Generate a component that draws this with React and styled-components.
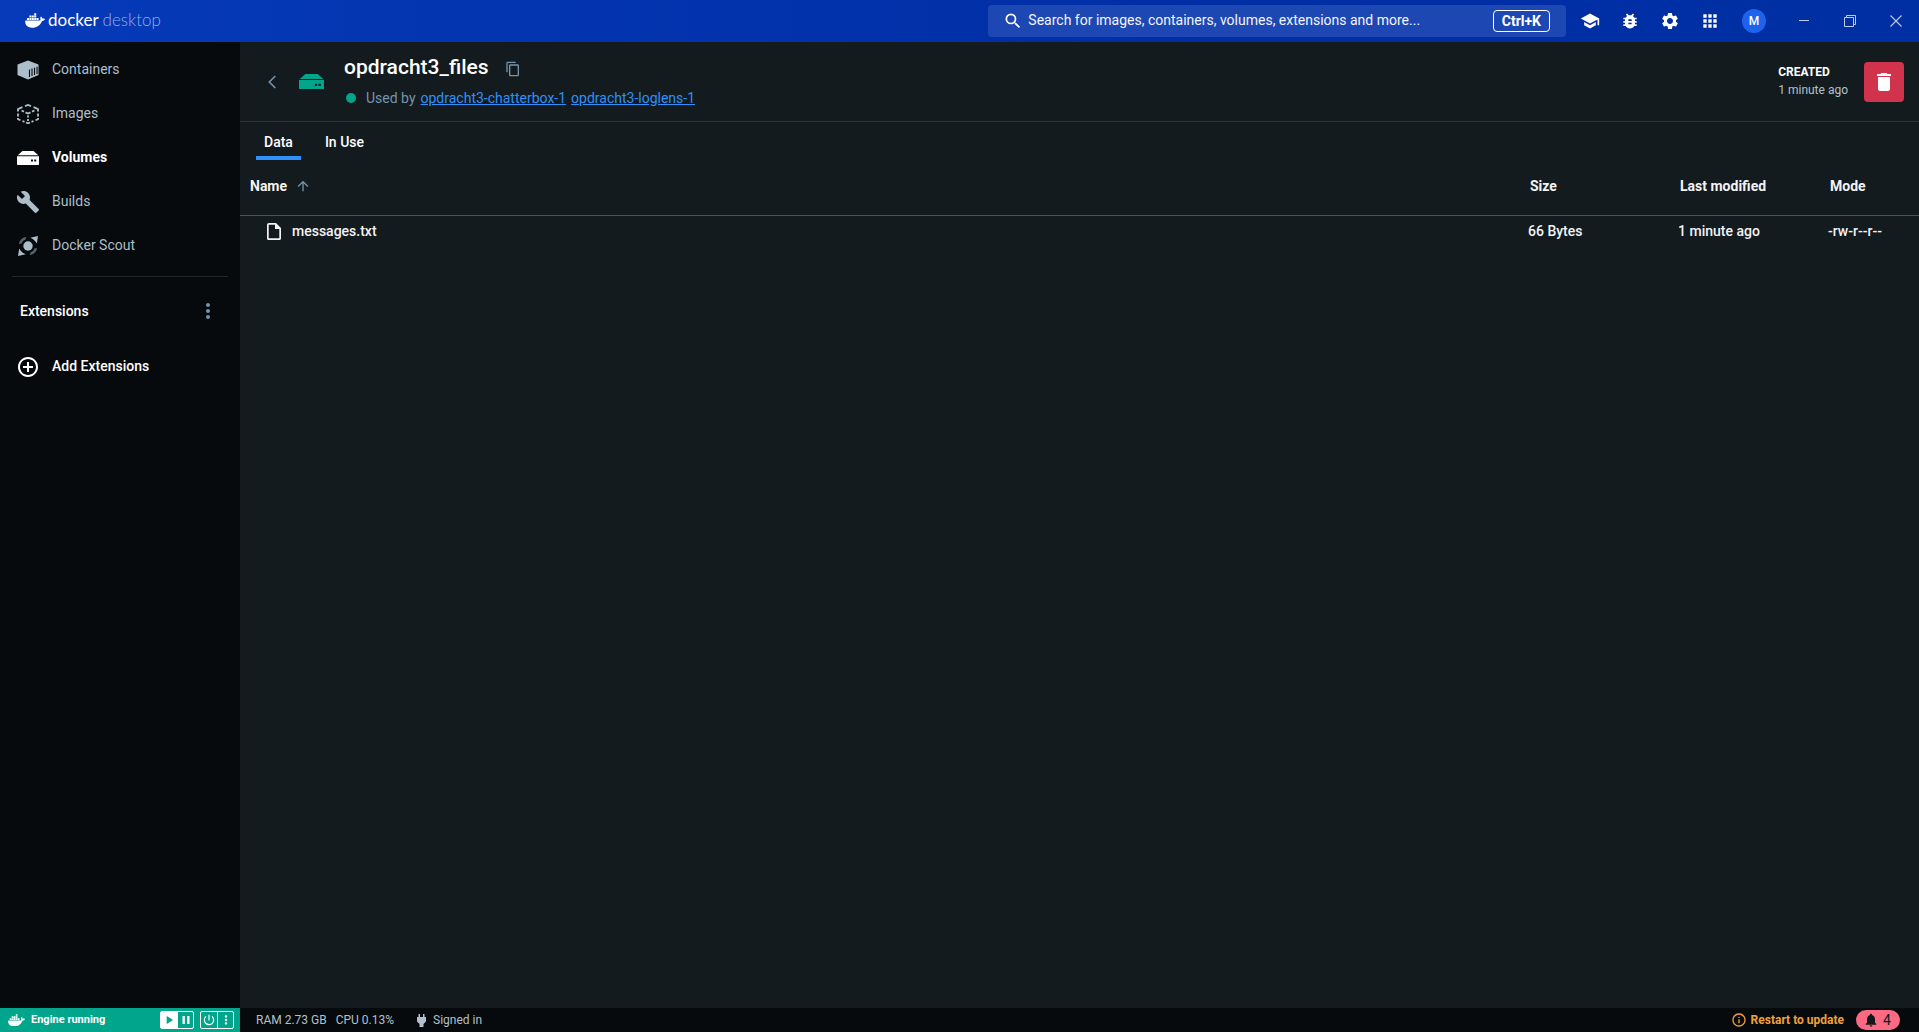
import React from "react";
import styled, { createGlobalStyle } from "styled-components";
import {
  MdAddCircleOutline,
  MdApps,
  MdArrowUpward,
  MdBugReport,
  MdBuild,
  MdContentCopy,
  MdDelete,
  MdInfoOutline,
  MdMoreVert,
  MdNotifications,
  MdPause,
  MdPlayArrow,
  MdPowerSettingsNew,
  MdSchool,
  MdSearch,
  MdSettings,
} from "react-icons/md";

const GlobalStyle = createGlobalStyle`
  * {
    box-sizing: border-box;
  }
  body {
    margin: 0;
    background-color: #141b1e;
    color: #ffffff;
    font-family: Roboto, "Liberation Sans", sans-serif;
    font-size: 14px;
    line-height: 20px;
  }
  button, input {
    font: inherit;
    color: inherit;
  }
  svg {
    display: block;
    flex-shrink: 0;
  }
`;

const Page = styled.div`
  display: flex;
  flex-direction: column;
  height: 100vh;
`;
const IconButton = styled.button`
  display: flex;
  align-items: center;
  justify-content: center;
  padding: 0;
  border: none;
  background: none;
  width: ${(props) => props.$width || 24}px;
  height: ${(props) => props.$height || 24}px;
  color: ${(props) => props.$color || "#ffffff"};
  cursor: pointer;
`;

const TopBar = styled.header`
  display: flex;
  align-items: center;
  height: 42px;
  flex-shrink: 0;
  padding-left: 25px;
  background: linear-gradient(90deg, #063ab8 0%, #002ea6 60%, #002ea3 100%);
`;
const Brand = styled.div`
  display: flex;
  align-items: center;
  gap: 3px;
  margin-right: auto;
  padding-bottom: 2px;
  font-family: Lato, sans-serif;
  font-size: 17px;
`;
const BrandSub = styled.span`
  font-weight: 300;
  color: #93abe6;
`;
const Search = styled.label`
  display: flex;
  align-items: center;
  width: 30.5%;
  height: 32px;
  margin-right: 4px;
  padding: 0 16px 0 15px;
  border-radius: 4px;
  background-color: #1d47b2;
`;
const SearchInput = styled.input`
  flex: 1;
  min-width: 0;
  margin-left: 5px;
  padding: 0 0 2px;
  border: none;
  outline: none;
  background: none;
  &::placeholder {
    color: #ffffff;
    opacity: 0.95;
  }
`;
const Shortcut = styled.kbd`
  height: 22px;
  padding: 0 8px;
  border: 1px solid #ffffff;
  border-radius: 4px;
  font-family: inherit;
  font-weight: 700;
`;
const Avatar = styled.button`
  width: 24px;
  height: 24px;
  margin: 0 15px 0 12px;
  padding: 0;
  border: none;
  border-radius: 50%;
  background-color: #1d63ed;
  font-size: 12px;
  font-weight: 500;
`;

const Body = styled.div`
  display: flex;
  flex: 1;
  min-height: 0;
`;
const Sidebar = styled.aside`
  display: flex;
  flex-direction: column;
  width: 240px;
  flex-shrink: 0;
  padding-top: 5px;
  background-color: #060a0c;
`;
const NavItem = styled.a`
  display: flex;
  align-items: center;
  gap: 12px;
  height: 44px;
  padding-left: 16px;
  color: ${(props) => (props.$bright ? "#ffffff" : "#adbecb")};
  font-weight: ${(props) => props.$weight || 400};
  text-decoration: none;
`;
const NavIcon = styled.span`
  display: flex;
  justify-content: center;
  width: 24px;
  padding-top: 2px;
`;
const Divider = styled.hr`
  width: 216px;
  height: 1px;
  margin: 9px 12px 0;
  border: none;
  background-color: #1f2729;
`;
const ExtensionsHeader = styled.div`
  display: flex;
  align-items: center;
  justify-content: space-between;
  height: 67px;
  padding: 0 20px;
  font-weight: 500;
`;

const Main = styled.main`
  flex: 1;
  min-width: 0;
`;
const VolumeHeader = styled.section`
  display: flex;
  align-items: center;
  height: 80px;
  padding: 0 15px 0 20px;
  border-bottom: 1px solid #2c3337;
`;
const VolumeIconBox = styled.span`
  margin: 0 20px 0 15px;
  color: #00a58c;
`;
const VolumeInfo = styled.div`
  flex: 1;
  padding-top: 3px;
`;
const TitleRow = styled.div`
  display: flex;
  align-items: center;
  gap: 12px;
  height: 30px;
`;
const Title = styled.h1`
  margin: 0;
  font-size: 21px;
  font-weight: 500;
  line-height: 28px;
`;
const CopyIcon = styled.span`
  padding-top: 4px;
`;
const UsedBy = styled.div`
  display: flex;
  align-items: center;
  gap: 5px;
  height: 32px;
  padding-left: 2px;
  color: #7794ab;
`;
const StatusDot = styled.span`
  width: 10px;
  height: 10px;
  margin-right: 5px;
  border-radius: 50%;
  background-color: #00a58c;
`;
const ContainerLink = styled.a`
  color: #2e90fa;
  text-decoration: underline;
`;
const Created = styled.div`
  margin-right: 16px;
  padding-bottom: 2px;
  font-size: 12px;
  line-height: 18px;
  color: #b1c0cc;
`;
const CreatedLabel = styled.div`
  color: #ffffff;
  font-weight: 700;
`;
const DeleteButton = styled.button`
  display: flex;
  align-items: center;
  justify-content: center;
  width: 40px;
  height: 40px;
  padding: 0;
  border: none;
  border-radius: 4px;
  background-color: #d1334c;
`;

const Tabs = styled.nav`
  display: flex;
  gap: 16px;
  padding: 0 16px;
`;
const Tab = styled.button`
  height: 38px;
  padding: 6px 8px 0;
  border: none;
  border-bottom: 4px solid ${(props) => (props.$active ? "#2e90fa" : "transparent")};
  background: none;
  font-weight: 500;
`;
const FileTable = styled.table`
  width: 100%;
  table-layout: fixed;
  border-collapse: separate;
  border-spacing: 0;
  color: #f2f3f4;
  text-align: left;
`;
const HeadCell = styled.th`
  width: ${(props) => props.$width || "auto"};
  height: 56px;
  padding: 0 10px 4px;
  border-bottom: 1px solid #4d5254;
  font-weight: 700;
`;
const Cell = styled.td`
  height: 30px;
  padding: 0 8px;
  font-weight: 500;
`;
const SortLabel = styled.span`
  display: flex;
  align-items: center;
  gap: 8px;
`;
const FileName = styled.span`
  display: flex;
  align-items: center;
  gap: 11px;
  padding-left: 19px;
`;

const Footer = styled.footer`
  display: flex;
  align-items: stretch;
  height: 24px;
  flex-shrink: 0;
  background-color: #060a0c;
  color: #b1c0cc;
  font-size: 12px;
`;
const Engine = styled.div`
  display: flex;
  align-items: center;
  width: 240px;
  padding: 0 6px 0 8px;
  background-color: #00a58c;
  color: #ffffff;
  font-size: 11px;
  font-weight: 700;
`;
const EngineText = styled.span`
  flex: 1;
  padding-left: 6px;
`;
const ButtonGroup = styled.div`
  display: flex;
  height: 18px;
  margin-left: 6px;
  border: 1px solid #ffffff;
  border-radius: 2px;
`;
const EngineButton = styled.button`
  display: flex;
  align-items: center;
  justify-content: center;
  width: 16px;
  padding: 0;
  border: none;
  background-color: ${(props) => (props.$filled ? "#ffffff" : "transparent")};
  color: ${(props) => (props.$filled ? "#00a58c" : "#ffffff")};
  & + & {
    border-left: 1px solid #ffffff;
  }
`;
const Stats = styled.div`
  display: flex;
  align-items: center;
  flex: 1;
  gap: 9px;
  padding-left: 16px;
`;
const SignedIn = styled.span`
  display: flex;
  align-items: center;
  gap: 7px;
  margin-left: 14px;
`;
const UpdateButton = styled.button`
  display: flex;
  align-items: center;
  gap: 4px;
  padding: 0;
  border: none;
  background: none;
  color: #f0a03c;
  font-weight: 700;
`;
const Notifications = styled.button`
  display: flex;
  align-items: center;
  justify-content: center;
  gap: 4px;
  align-self: center;
  width: 44px;
  height: 20px;
  margin: 0 19px 0 12px;
  padding: 0 2px 0 0;
  border: none;
  border-radius: 10px;
  background-color: #fb6a82;
  color: #10181b;
  font-size: 14px;
`;

function WhaleIcon({ width }) {
  return (
    <svg width={width} height={(width * 15) / 20} viewBox="0 0 20 15" fill="currentColor">
      <path d="M0.300 7.500H15.200C15.500 7 15.700 6.500 15.300 5.600 15.100 5 15.500 4 16 3.600 17 4.200 17.200 5 17.300 5.600 18.100 5.300 19.200 5.400 20 5.900 19.500 7.200 18.500 7.900 17 7.900 15.200 12.300 12 14.700 7.200 14.700 2.500 14.700-0.400 12 0.300 7.500Z" />
      <path d="M2 5H4V7H2ZM4.400 5H6.400V7H4.400ZM6.800 5H8.800V7H6.800ZM9.200 5H11.200V7H9.200ZM11.600 5H13.600V7H11.600ZM4.400 2.600H6.400V4.600H4.400ZM6.800 2.600H8.800V4.600H6.800ZM9.200 2.600H11.200V4.600H9.200ZM9.200 0.200H11.200V2.200H9.200Z" />
    </svg>
  );
}

function ContainerIcon() {
  return (
    <svg width="22" height="20" viewBox="0 0 22 20" fill="currentColor">
      <path d="M11 0.500 21.500 4.500V15L11 19.500 0.500 15V4.500Z" />
      <path
        d="M12.500 9.500V17M15 8.500V16M17.500 7.700V15M20 6.800V14"
        stroke="#060a0c"
        strokeWidth="1.100"
      />
    </svg>
  );
}

function ImageIcon() {
  return (
    <svg width="22" height="20" viewBox="0 0 22 20" fill="none" stroke="currentColor" strokeWidth="1.800">
      <path d="M8 2.200 11 1 14 2.200M16.500 3.200 19.500 4.400 21 5V7.500M21 9.500V12.500M21 14V15.200L18.500 16.300M16.500 17 14.500 17.900M13 18.500 11 19.300 9 18.500M7.500 17.900 5.500 17M3.500 16.300 1 15.200V14M1 12.500V9.500M1 7.500V5L2.500 4.400 5.500 3.200" />
      <path d="M4.500 6.500 7 7.600M8.500 8.400 11 9.600 13.500 8.400M15 7.600 17.500 6.500M11 11.500V13.500M11 15V17" />
    </svg>
  );
}

function VolumeIcon({ width, eye }) {
  return (
    <svg width={width} height={(width * 14) / 22} viewBox="0 0 22 14" fill="currentColor">
      <path d="M5.500 0H16.500L21.300 4.300H0.700Z" />
      <path d="M0 5.300H22V13C22 13.500 21.700 14 21 14H1C0.300 14 0 13.500 0 13Z" />
      <path d="M14 8.500H16V10.500H14ZM17.200 8.500H19.200V10.500H17.200Z" fill={eye} />
    </svg>
  );
}

function ScoutIcon() {
  return (
    <svg width="20" height="20" viewBox="0 0 20 20" fill="currentColor">
      <circle cx="10" cy="10" r="4.700" />
      <path d="M20 0 18.800 7.500C17.500 5 15.300 2.900 12.300 1.700ZM0 20 1.200 12.500C2.500 15 4.700 17.100 7.700 18.300Z" />
      <path
        d="M1 8C1.500 4.200 4.500 1.300 8.200 1L7.500 3.500C5.500 4.200 4.200 5.500 3.500 7.500ZM19 12C18.500 15.800 15.500 18.700 11.800 19L12.500 16.500C14.500 15.800 15.800 14.500 16.500 12.500Z"
        opacity="0.500"
      />
    </svg>
  );
}

function BackIcon() {
  return (
    <svg width="8" height="14" viewBox="0 0 8 14" fill="none" stroke="currentColor" strokeWidth="1.600">
      <path d="M7.300 1 1.300 7 7.300 13" />
    </svg>
  );
}

function FileIcon() {
  return (
    <svg width="14" height="17" viewBox="0 0 14 17" fill="currentColor">
      <path
        fillRule="evenodd"
        d="M2 0H9L14 5V15.500C14 16.300 13.300 17 12.500 17H1.500C0.700 17 0 16.300 0 15.500V2C0 0.800 0.800 0 2 0ZM1.700 1.700V15.300H12.300V6H8V1.700Z"
      />
    </svg>
  );
}

function PlugIcon() {
  return (
    <svg width="9" height="13" viewBox="0 0 9 13" fill="currentColor">
      <path d="M1.500 0H3V3H6V0H7.500V3H9V7.500L6.500 10V13H2.500V10L0 7.500V3H1.500Z" />
    </svg>
  );
}

function MinimizeIcon() {
  return (
    <svg width="10" height="10" viewBox="0 0 10 10" stroke="currentColor">
      <path d="M0 4.500H10" />
    </svg>
  );
}

function RestoreIcon() {
  return (
    <svg width="12" height="12" viewBox="0 0 12 12" fill="none" stroke="currentColor">
      <path d="M0.500 2.500H9.500V11.500H0.500ZM2.500 2.500V0.500H11.500V9.500H9.500" />
    </svg>
  );
}

function CloseIcon() {
  return (
    <svg width="12" height="12" viewBox="0 0 12 12" stroke="currentColor" strokeWidth="1.100">
      <path d="M0.500 0.500 11.500 11.500M11.500 0.500 0.500 11.500" />
    </svg>
  );
}

const navItems = [
  { label: "Containers", icon: <ContainerIcon /> },
  { label: "Images", icon: <ImageIcon /> },
  { label: "Volumes", icon: <VolumeIcon width={22} eye="#060a0c" />, active: true },
  { label: "Builds", icon: <MdBuild size={24} /> },
  { label: "Docker Scout", icon: <ScoutIcon /> },
];

const files = [
  { name: "messages.txt", size: "66 Bytes", modified: "1 minute ago", mode: "-rw-r--r--" },
];

function App() {
  return (
    <Page>
      <GlobalStyle />
      <TopBar>
        <Brand>
          <WhaleIcon width={20} />
          <span>
            docker <BrandSub>desktop</BrandSub>
          </span>
        </Brand>
        <Search>
          <MdSearch size={20} />
          <SearchInput
            type="text"
            aria-label="Search"
            placeholder="Search for images, containers, volumes, extensions and more..."
          />
          <Shortcut>Ctrl+K</Shortcut>
        </Search>
        <IconButton $width={40} aria-label="Learning center">
          <MdSchool size={20} />
        </IconButton>
        <IconButton $width={40} aria-label="Troubleshoot">
          <MdBugReport size={20} />
        </IconButton>
        <IconButton $width={40} aria-label="Settings">
          <MdSettings size={20} />
        </IconButton>
        <IconButton $width={40} aria-label="Apps">
          <MdApps size={20} />
        </IconButton>
        <Avatar aria-label="Account">M</Avatar>
        <IconButton $width={46} $color="#bfcbe9" aria-label="Minimize">
          <MinimizeIcon />
        </IconButton>
        <IconButton $width={46} $color="#bfcbe9" aria-label="Restore">
          <RestoreIcon />
        </IconButton>
        <IconButton $width={46} $color="#bfcbe9" aria-label="Close">
          <CloseIcon />
        </IconButton>
      </TopBar>
      <Body>
        <Sidebar>
          {navItems.map((item) => (
            <NavItem
              key={item.label}
              href="#"
              $bright={item.active}
              $weight={item.active ? 700 : 400}
            >
              <NavIcon>{item.icon}</NavIcon>
              {item.label}
            </NavItem>
          ))}
          <Divider />
          <ExtensionsHeader>
            Extensions
            <IconButton $color="#7794ab" aria-label="Extension options">
              <MdMoreVert size={24} />
            </IconButton>
          </ExtensionsHeader>
          <NavItem href="#" $bright $weight={500}>
            <NavIcon>
              <MdAddCircleOutline size={24} />
            </NavIcon>
            Add Extensions
          </NavItem>
        </Sidebar>
        <Main>
          <VolumeHeader>
            <IconButton $color="#7794ab" aria-label="Back">
              <BackIcon />
            </IconButton>
            <VolumeIconBox>
              <VolumeIcon width={25} eye="#141b1e" />
            </VolumeIconBox>
            <VolumeInfo>
              <TitleRow>
                <Title>opdracht3_files</Title>
                <IconButton $color="#7794ab" aria-label="Copy name">
                  <CopyIcon>
                    <MdContentCopy size={16} />
                  </CopyIcon>
                </IconButton>
              </TitleRow>
              <UsedBy>
                <StatusDot />
                <span>Used by</span>
                <ContainerLink href="#">opdracht3-chatterbox-1</ContainerLink>
                <ContainerLink href="#">opdracht3-loglens-1</ContainerLink>
              </UsedBy>
            </VolumeInfo>
            <Created>
              <CreatedLabel>CREATED</CreatedLabel>1 minute ago
            </Created>
            <DeleteButton aria-label="Delete volume">
              <MdDelete size={24} />
            </DeleteButton>
          </VolumeHeader>
          <Tabs>
            <Tab $active>Data</Tab>
            <Tab>In Use</Tab>
          </Tabs>
          <FileTable>
            <thead>
              <tr>
                <HeadCell>
                  <SortLabel>
                    Name <MdArrowUpward size={16} color="#7794ab" />
                  </SortLabel>
                </HeadCell>
                <HeadCell $width="150px">Size</HeadCell>
                <HeadCell $width="150px">Last modified</HeadCell>
                <HeadCell $width="99px">Mode</HeadCell>
              </tr>
            </thead>
            <tbody>
              {files.map((file) => (
                <tr key={file.name}>
                  <Cell>
                    <FileName>
                      <FileIcon />
                      {file.name}
                    </FileName>
                  </Cell>
                  <Cell>{file.size}</Cell>
                  <Cell>{file.modified}</Cell>
                  <Cell>{file.mode}</Cell>
                </tr>
              ))}
            </tbody>
          </FileTable>
        </Main>
      </Body>
      <Footer>
        <Engine>
          <WhaleIcon width={17} />
          <EngineText>Engine running</EngineText>
          <ButtonGroup>
            <EngineButton $filled aria-label="Start">
              <MdPlayArrow size={14} />
            </EngineButton>
            <EngineButton aria-label="Pause">
              <MdPause size={14} />
            </EngineButton>
          </ButtonGroup>
          <ButtonGroup>
            <EngineButton aria-label="Power">
              <MdPowerSettingsNew size={14} />
            </EngineButton>
            <EngineButton aria-label="More">
              <MdMoreVert size={14} />
            </EngineButton>
          </ButtonGroup>
        </Engine>
        <Stats>
          <span>RAM 2.73 GB</span>
          <span>CPU 0.13%</span>
          <SignedIn>
            <PlugIcon />
            Signed in
          </SignedIn>
        </Stats>
        <UpdateButton>
          <MdInfoOutline size={16} />
          Restart to update
        </UpdateButton>
        <Notifications aria-label="4 notifications">
          <MdNotifications size={16} />4
        </Notifications>
      </Footer>
    </Page>
  );
}

export default App;
